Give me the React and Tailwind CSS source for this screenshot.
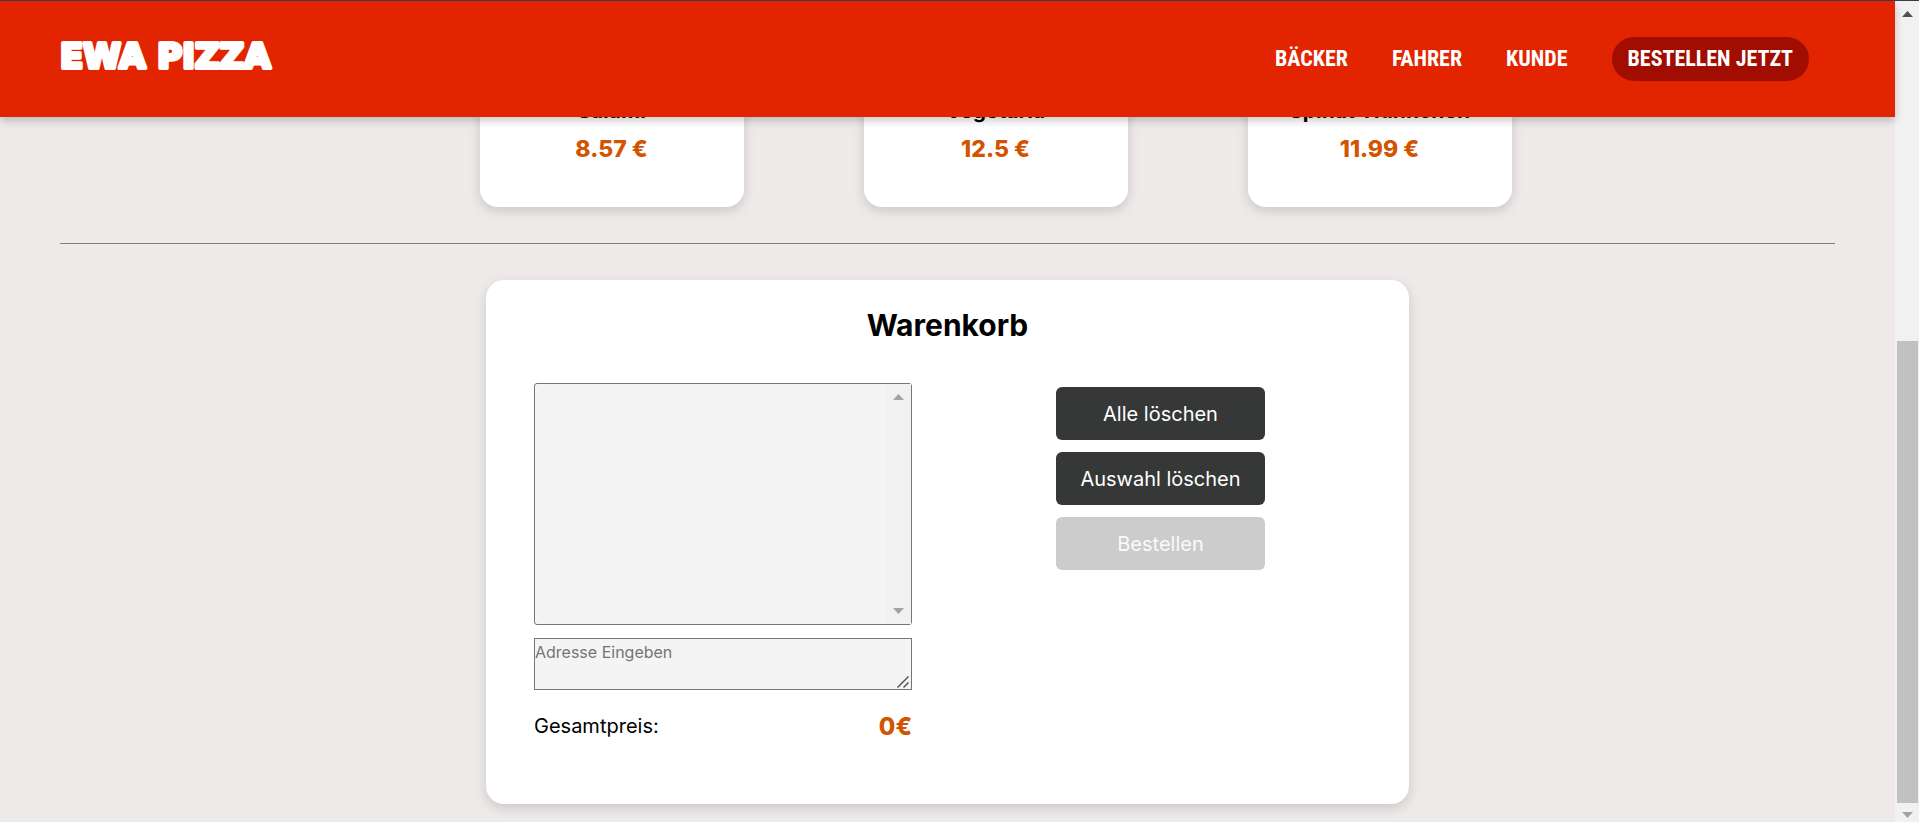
import React from "react";

const pizzas = [
  { name: "Salami", price: "8.57 €" },
  { name: "Vegetaria", price: "12.5 €" },
  { name: "Spinat-Hühnchen", price: "11.99 €" },
];

const links = ["BÄCKER", "FAHRER", "KUNDE"];

function Arrow({ down = false, className }) {
  return (
    <svg viewBox="0 0 11 6" className={className} aria-hidden="true">
      <path d={down ? "M0 0h11L5.5 6z" : "M0 6h11L5.5 0z"} fill="currentColor" />
    </svg>
  );
}

function Logo() {
  return (
    <svg viewBox="0 0 240 60" className="h-[60px] w-60 overflow-visible">
      <text
        x="0"
        y="39"
        fill="#ffffff"
        stroke="#ffffff"
        strokeWidth="4"
        strokeLinejoin="round"
        className="font-['DejaVu_Sans',sans-serif] text-[34px] font-bold"
      >
        EWA PIZZA
      </text>
    </svg>
  );
}

function Header() {
  return (
    <header className="relative z-10 flex h-[117px] items-center justify-between border-t border-[#3b3b50] bg-[#e22400] pr-[86px] pl-[60px] shadow-[0_4px_8px_rgba(0,0,0,0.2)]">
      <a href="#" className="block">
        <Logo />
      </a>
      <nav className="flex items-center gap-11 font-['Liberation_Sans_Narrow','Roboto_Condensed','Open_Sans_Condensed','Liberation_Sans',sans-serif] text-[22px] leading-8 font-bold text-white">
        {links.map((link) => (
          <a key={link} href="#">
            {link}
          </a>
        ))}
        <a href="#" className="rounded-[22px] bg-[#a10d00] px-4 py-1.5">
          BESTELLEN JETZT
        </a>
      </nav>
    </header>
  );
}

function PizzaCard({ name, price }) {
  return (
    <li className="flex w-[264px] flex-col items-center rounded-b-[18px] bg-white pt-4 pb-10 shadow-[0_4px_12px_rgba(0,0,0,0.15)]">
      <h3 className="text-[21px] leading-8 font-bold whitespace-nowrap text-black">{name}</h3>
      <p className="mt-1 text-[23px] leading-9 font-extrabold text-[#d35400]">{price}</p>
    </li>
  );
}

function Cart() {
  const button = "h-[53px] w-full rounded-md text-[20px] whitespace-nowrap";
  return (
    <section className="mx-auto mt-9 mb-[18px] w-[52%] rounded-[18px] bg-white pt-6 pb-14 shadow-[0_4px_12px_rgba(0,0,0,0.15)]">
      <h2 className="text-center text-[30px] leading-[43px] font-bold text-black">Warenkorb</h2>
      <form className="mt-9 flex pl-12" onSubmit={(e) => e.preventDefault()}>
        <div className="w-[378px]">
          <div className="flex h-[242px] rounded-[3px] border border-[#767676] bg-[#f4f4f4]">
            <select multiple aria-label="Warenkorb" className="min-w-0 flex-1 appearance-none bg-transparent outline-none" />
            <div className="flex w-[25px] flex-col items-center justify-between bg-[#f1f1f1] py-2.5 text-[#a3a3a3]">
              <Arrow className="h-1.5 w-[11px]" />
              <Arrow down className="h-1.5 w-[11px]" />
            </div>
          </div>
          <div className="relative mt-[13px] flex">
            <textarea
              aria-label="Adresse"
              placeholder="Adresse Eingeben"
              className="h-[52px] w-full resize-none border border-[#767676] bg-[#f4f4f4] text-[16px] leading-[26px] outline-none placeholder:text-[#757575]"
            />
            <svg viewBox="0 0 12 12" className="absolute right-[3px] bottom-0.5 h-3 w-3" aria-hidden="true">
              <path d="M.5 11.5l11-11M6.5 11.5l5-5" stroke="#4a4a4a" strokeWidth="1.4" />
            </svg>
          </div>
          <p className="mt-4 flex items-start justify-between text-black">
            <span className="text-[20px] leading-10">Gesamtpreis:</span>
            <output className="text-[24px] leading-[42px] font-extrabold text-[#d35400]">0€</output>
          </p>
        </div>
        <div className="flex flex-1 justify-center pt-1">
          <div className="flex w-[209px] flex-col gap-3">
            <button type="button" className={`${button} bg-[#363737] text-white`}>Alle löschen</button>
            <button type="button" className={`${button} bg-[#363737] text-white`}>Auswahl löschen</button>
            <button type="submit" disabled className={`${button} bg-[#cccccc] text-[#fafafa]`}>Bestellen</button>
          </div>
        </div>
      </form>
    </section>
  );
}

function Scrollbar() {
  return (
    <div className="flex w-6 shrink-0 flex-col items-center border-t border-[#3b3b50] bg-[#f1f1f1]" aria-hidden="true">
      <Arrow className="mt-2.5 h-1.5 w-[11px] shrink-0 text-[#505050]" />
      <div className="min-h-0 flex-[324]" />
      <div className="mr-px ml-0.5 min-h-0 flex-[462] self-stretch bg-[#c1c1c1]" />
      <Arrow down className="mt-[9px] mb-1 h-1.5 w-[11px] shrink-0 text-[#a3a3a3]" />
    </div>
  );
}

export default function App() {
  return (
    <div className="flex min-h-screen bg-[#eeeae9] font-[Inter,sans-serif]">
      <div className="min-w-0 flex-1">
        <Header />
        <main className="-mt-[38px] px-[60px]">
          <ul className="flex justify-center gap-[120px] pl-24">
            {pizzas.map((pizza) => (
              <PizzaCard key={pizza.name} {...pizza} />
            ))}
          </ul>
          <hr className="mt-9 border-t border-[#808080]" />
          <Cart />
        </main>
      </div>
      <Scrollbar />
    </div>
  );
}
